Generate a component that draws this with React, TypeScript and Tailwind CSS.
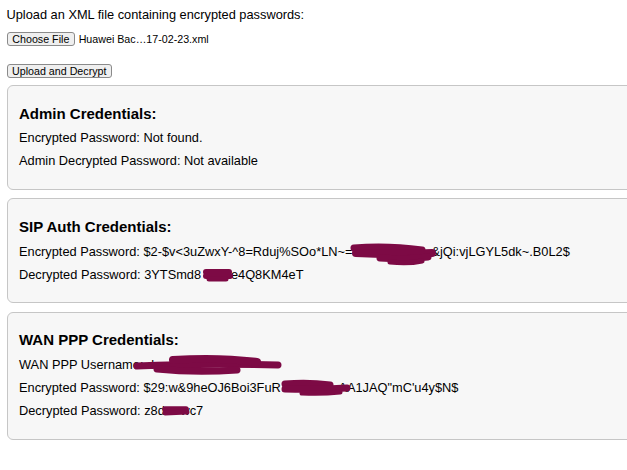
import React from "react";

const INK = "#7d0a45";

function Scribble({
  className,
  w,
  h,
  strokes,
}: {
  className: string;
  w: number;
  h: number;
  strokes: { d: string; sw: number }[];
}) {
  return (
    <svg
      className={className}
      width={w}
      height={h}
      viewBox={`0 0 ${w} ${h}`}
      fill="none"
    >
      {strokes.map((s, i) => (
        <path
          key={i}
          d={s.d}
          stroke={INK}
          strokeWidth={s.sw}
          strokeLinecap="round"
          strokeLinejoin="round"
        />
      ))}
    </svg>
  );
}

function Card({
  title,
  first,
  children,
}: {
  title: string;
  first?: boolean;
  children: React.ReactNode;
}) {
  return (
    <div
      className={`${first ? "mt-[7px]" : "mt-[8.5px]"} w-[700px] border border-[#c6c6c6] rounded-[6px] bg-[#f7f7f7] pl-[11.5px] pt-[18.5px] pb-[20px]`}
    >
      <h3 className="h-[17.2px] text-[15px] leading-[17.2px] font-bold">{title}</h3>
      <div className="mt-[9.5px] flex flex-col gap-[8.3px]">{children}</div>
    </div>
  );
}

function Line({ children }: { children: React.ReactNode }) {
  return <p className="relative h-[14.7px] whitespace-nowrap">{children}</p>;
}

export default function App() {
  return (
    <div className="w-[627px] h-[470px] overflow-hidden bg-white text-black font-['Liberation_Sans',Arial,Helvetica,sans-serif] text-[12.8px] leading-[14.7px] pl-[6.5px] pt-[8.4px]">
      <p className="h-[14.7px]">Upload an XML file containing encrypted passwords:</p>
      <div className="mt-[9px] flex items-center gap-[3.5px] h-[14px]">
        <button className="h-[14px] px-[4.8px] flex items-center border border-[#8a8a8a] rounded-[3px] bg-[#efefef] text-[10.7px] leading-none text-black">
          Choose File
        </button>
        <span className="text-[10.7px] leading-none">Huawei Bac…17-02-23.xml</span>
      </div>
      <div className="mt-[18px] flex">
        <button className="h-[14px] px-[4.5px] flex items-center border border-[#8a8a8a] rounded-[3px] bg-[#efefef] text-[10.7px] leading-none text-black">
          Upload and Decrypt
        </button>
      </div>

      <Card title="Admin Credentials:" first>
        <Line>Encrypted Password: Not found.</Line>
        <Line>Admin Decrypted Password: Not available</Line>
      </Card>

      <Card title="SIP Auth Credentials:">
        <Line>
          {"Encrypted Password: $2-$v<3uZwxY-^8=Rduj%SOo*LN~=i"}
          <span className="text-transparent">T7Wv9KqRet</span>
          {"&jQi:vjLGYL5dk~.B0L2$"}
          <Scribble
            className="absolute left-[331px] top-[-2px]"
            w={86}
            h={24}
            strokes={[
              { d: "M4 5 Q36 2 72 7", sw: 7 },
              { d: "M6 10 Q44 12 82 10", sw: 8 },
              { d: "M30 15 Q55 17 78 14", sw: 7 },
              { d: "M40 19 Q58 21 72 18", sw: 5 },
            ]}
          />
        </Line>
        <Line>
          Decrypted Password: 3YTSmd8
          <span className="text-transparent">SWx</span>
          le4Q8KM4eT
          <Scribble
            className="absolute left-[183px] top-[0.5px]"
            w={32}
            h={15}
            strokes={[
              { d: "M4 4 L27 4", sw: 6 },
              { d: "M4 8 L28 8", sw: 6 },
              { d: "M7 11 L24 11", sw: 5 },
            ]}
          />
        </Line>
      </Card>

      <Card title="WAN PPP Credentials:">
        <Line>
          WAN PPP Username: d
          <span className="text-transparent">xxxxxxxxxxxxxxxx</span>
          <Scribble
            className="absolute left-[114px] top-[-4px]"
            w={150}
            h={22}
            strokes={[
              { d: "M4 12 Q70 9 145 11", sw: 7 },
              { d: "M40 6 Q85 3 124 8", sw: 8 },
              { d: "M24 15 Q62 19 104 16", sw: 7 },
            ]}
          />
        </Line>
        <Line>
          {"Encrypted Password: $29:w&9heOJ6Boi3FuR"}
          <span className="text-transparent">xZ7k92B1</span>
          {"AA1JAQ\"mC'u4y$N$"}
          <Scribble
            className="absolute left-[261px] top-[-2px]"
            w={72}
            h={18}
            strokes={[
              { d: "M5 5 Q28 3 50 6", sw: 7 },
              { d: "M5 10 Q36 11 67 9", sw: 7 },
              { d: "M22 14 Q42 15 60 13", sw: 5 },
            ]}
          />
        </Line>
        <Line>
          Decrypted Password: z8d
          <span className="text-transparent">8S</span>
          wc7
          <Scribble
            className="absolute left-[142px] top-[1.5px]"
            w={30}
            h={12}
            strokes={[
              { d: "M4 4 L25 4", sw: 5.5 },
              { d: "M4 8 L26 7", sw: 5 },
            ]}
          />
        </Line>
      </Card>
    </div>
  );
}
